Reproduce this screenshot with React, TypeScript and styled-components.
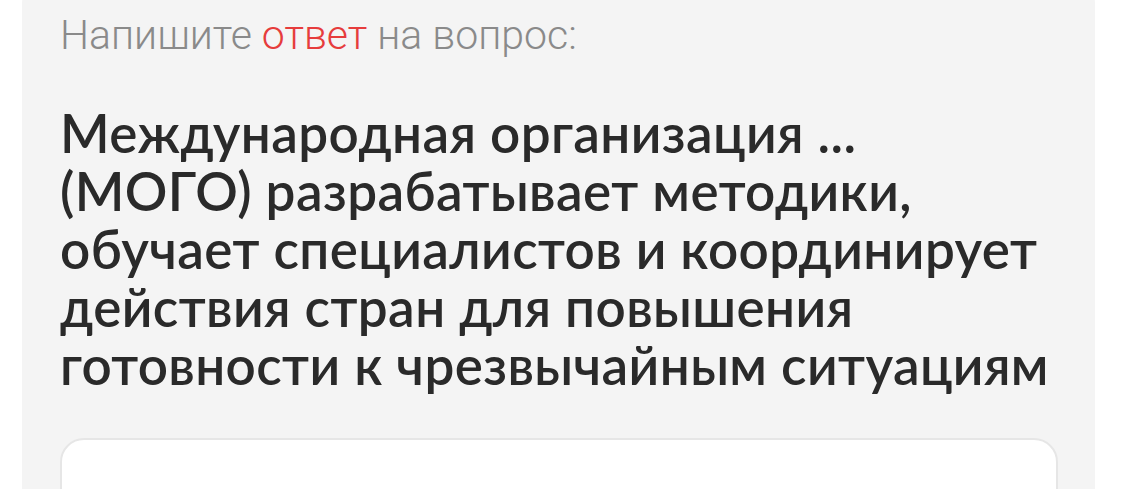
import React, { useState } from 'react';
import styled, { createGlobalStyle } from 'styled-components';

const GlobalStyle = createGlobalStyle`
  html, body {
    margin: 0;
    padding: 0;
    background: #fff;
    overflow: hidden;
  }
`;

const Card = styled.section`
  margin: -20px 48px 0 22px;
  padding: 20px 37px 0 38px;
  height: 520px;
  box-sizing: border-box;
  background: #f4f4f4;
  border-radius: 24px 24px 0 0;
`;

const Hint = styled.div`
  font-family: Roboto, 'Noto Sans', sans-serif;
  font-weight: 300;
  font-size: 41px;
  line-height: 48px;
  color: #8a8a8a;
  padding-top: 11px;

  span {
    color: #e63c3c;
  }
`;

const Question = styled.h2`
  margin: 45px 0 0;
  font-family: Lato, 'Noto Sans', sans-serif;
  font-weight: 600;
  font-size: 53px;
  line-height: 58px;
  letter-spacing: 0.4px;
  color: #2a2a2a;
  max-width: 1010px;
`;

const AnswerBox = styled.textarea`
  display: block;
  width: 100%;
  height: 120px;
  margin-top: 44px;
  box-sizing: border-box;
  background: #fff;
  border: 2px solid #e6e6e6;
  border-radius: 24px;
  resize: none;
  outline: none;
  padding: 20px 24px;
  font-family: Roboto, sans-serif;
  font-size: 28px;
`;

function App(): JSX.Element {
  const [answer, setAnswer] = useState<string>('');

  return (
    <>
      <GlobalStyle />
      <Card>
        <Hint>
          Напишите <span>ответ</span> на вопрос:
        </Hint>
        <Question>
          Международная организация ...
          <br />
          (МОГО) разрабатывает методики,
          <br />
          обучает специалистов и координирует
          <br />
          действия стран для повышения
          <br />
          готовности к чрезвычайным ситуациям
        </Question>
        <AnswerBox value={answer} onChange={(e) => setAnswer(e.target.value)} />
      </Card>
    </>
  );
}

export default App;
